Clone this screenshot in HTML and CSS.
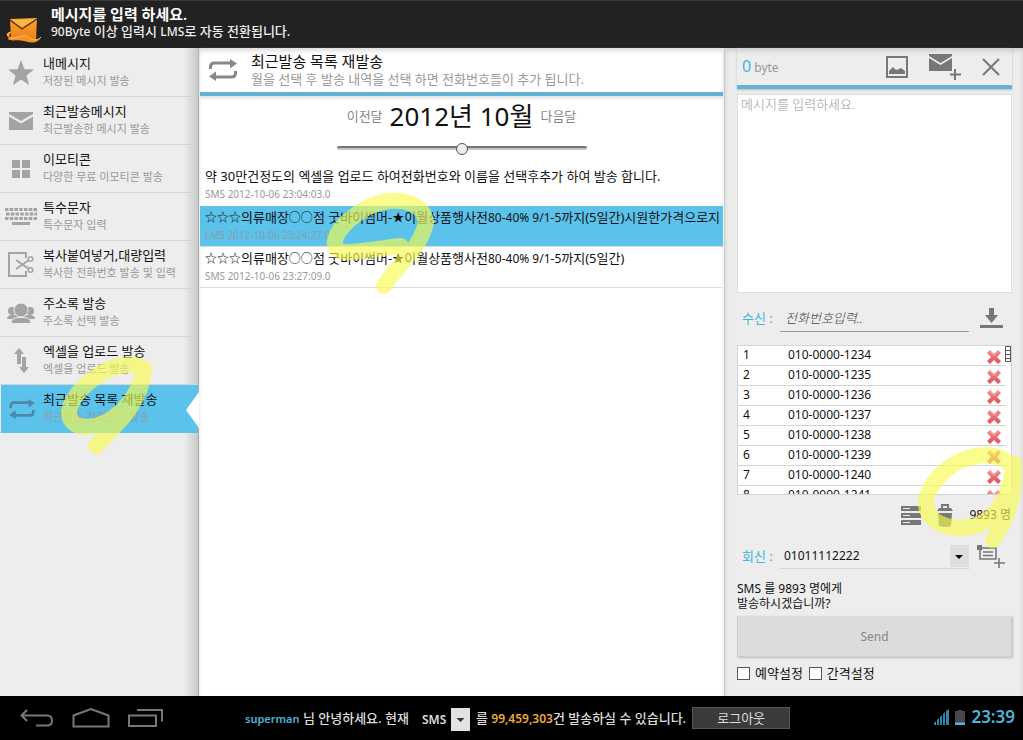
FILE: index.html
```html
<!DOCTYPE html>
<html lang="ko">
<head>
<meta charset="utf-8">
<meta name="viewport" content="width=device-width, initial-scale=1">
<title>메시지 발송</title>
<link rel="stylesheet" href="styles.css">
</head>
<body>
<svg class="defs" aria-hidden="true">
  <defs>
    <linearGradient id="orange" x1="0" y1="0" x2="0" y2="1"><stop offset="0" stop-color="#f9a733"/><stop offset="1" stop-color="#f07a16"/></linearGradient>
    <linearGradient id="red" x1="0" y1="0" x2="0" y2="1"><stop offset="0" stop-color="#f08a8a"/><stop offset="1" stop-color="#e0525c"/></linearGradient>
    <symbol id="repeat" viewBox="0 0 28 22"><path d="M1.500 10V8q0-4 4-4H22M26.500 12v2q0 4-4 4H6" fill="none" stroke="currentColor" stroke-width="3"/><path d="M21 0l7 4.500-7 5zM7 12.500v9.500l-7-4.500z" fill="currentColor"/></symbol>
    <symbol id="cross" viewBox="0 0 14 14"><path d="M3 0l4 4 4-4 3 3-4 4 4 4-3 3-4-4-4 4-3-3 4-4-4-4z" fill="url(#red)"/><path d="M3 1.500l4 4 4-4" fill="none" stroke="#f6b0b0"/></symbol>
  </defs>
</svg>

<header class="topbar">
  <svg class="logo" viewBox="0 0 36 26" aria-hidden="true">
    <path d="M4 2L31 1l-1 22L5 21z" fill="url(#orange)"/>
    <path d="M5 3l11 7L30 2z" fill="#fbb646"/>
    <path d="M4 3l12 9L31 2" fill="none" stroke="#5a2c08" stroke-width="1.400"/>
    <path d="M5 15C0 15-1 20 5 21c8 1 12-5 19 0 5 3 10 2 11-1-3 7-11 6-17 4S5 25 2 22" fill="#f7931e"/>
    <path d="M5 15c-5 1-5 5 1 6 7 0 12-5 18 0 4 3 9 2 11-1" fill="none" stroke="#ffc35c"/>
  </svg>
  <div>
    <h1 class="topbar-title">메시지를 입력 하세요.</h1>
    <p class="topbar-note"><span class="latin">90Byte</span> 이상 입력시 <span class="latin">LMS</span>로 자동 전환됩니다.</p>
  </div>
</header>

<main class="layout">
  <nav class="sidebar" aria-label="메뉴">
    <a class="menu-item" href="#saved">
      <svg width="26" height="25" viewBox="0 0 26 25"><path d="M13 0l3.400 9.200 9.600.4-7.600 6 2.700 9.400-8.100-5.500L4.900 25l2.700-9.400L0 9.600l9.600-.4z"/></svg>
      <span class="menu-text"><span class="menu-title">내메시지</span><span class="menu-note">저장된 메시지 발송</span></span>
    </a>
    <a class="menu-item" href="#recent">
      <svg width="24" height="18" viewBox="0 0 24 18"><path d="M0 0h24v2l-12 7L0 2zM0 4.500l12 7 12-7V18H0z"/></svg>
      <span class="menu-text"><span class="menu-title">최근발송메시지</span><span class="menu-note">최근발송한 메시지 발송</span></span>
    </a>
    <a class="menu-item" href="#emoticon">
      <svg width="18" height="18" viewBox="0 0 18 18"><path d="M0 0h8v8H0zM10 0h8v8h-8zM0 10h8v8H0zM10 10h8v8h-8z"/></svg>
      <span class="menu-text"><span class="menu-title">이모티콘</span><span class="menu-note">다양한 무료 이모티콘 발송</span></span>
    </a>
    <a class="menu-item" href="#special">
      <svg width="32" height="17" viewBox="0 0 32 17"><path d="M0 1.500h32M1 6h31M0 10.500h32" fill="none" stroke="currentColor" stroke-width="3" stroke-dasharray="3.500 1.250"/><path d="M7 14h18v3H7z"/></svg>
      <span class="menu-text"><span class="menu-title">특수문자</span><span class="menu-note">특수문자 입력</span></span>
    </a>
    <a class="menu-item" href="#paste">
      <svg width="26" height="25" viewBox="0 0 26 25"><path d="M18 6V1H1v23h17v-5" fill="none" stroke="currentColor" stroke-width="2"/><path d="M8 8l13 9M8 17l13-9" fill="none" stroke="currentColor" stroke-width="2"/><circle cx="22.500" cy="7" r="2.300" fill="none" stroke="currentColor" stroke-width="1.500"/><circle cx="22.500" cy="18" r="2.300" fill="none" stroke="currentColor" stroke-width="1.500"/></svg>
      <span class="menu-text"><span class="menu-title">복사붙여넣거,대량입력</span><span class="menu-note">복사한 전화번호 발송 및 입력</span></span>
    </a>
    <a class="menu-item" href="#contacts">
      <svg width="28" height="20" viewBox="0 0 28 20"><circle cx="5" cy="8" r="4"/><circle cx="23" cy="8" r="4"/><path d="M0 16q0-4 6-4t6 4zM16 16q0-4 6-4t6 4z"/><path d="M4 20.500q0-5.500 7-6h6q7 .5 7 6z" stroke="#ededed"/><circle cx="14" cy="7" r="7" stroke="#ededed"/></svg>
      <span class="menu-text"><span class="menu-title">주소록 발송</span><span class="menu-note">주소록 선택 발송</span></span>
    </a>
    <a class="menu-item" href="#excel">
      <svg width="15" height="25" viewBox="0 0 15 25"><path d="M5 0l5 6H7v10H3V6H0zM8 9h4v10h3l-5 6-5-6h3z"/></svg>
      <span class="menu-text"><span class="menu-title">엑셀을 업로드 발송</span><span class="menu-note">엑셀을 업로드 발송</span></span>
    </a>
    <a class="menu-item selected" href="#resend" aria-current="page">
      <svg width="26" height="20"><use href="#repeat"/></svg>
      <span class="menu-text"><span class="menu-title">최근발송 목록 재발송</span><span class="menu-note">최근발송 전화번호 발송</span></span>
    </a>
  </nav>

  <section class="history">
    <header class="history-head">
      <svg width="28" height="22" aria-hidden="true"><use href="#repeat"/></svg>
      <div>
        <h2 class="history-title">최근발송 목록 재발송</h2>
        <p class="history-note">월을 선택 후 발송 내역을 선택 하면 전화번호들이 추가 됩니다.</p>
      </div>
    </header>
    <div class="month">
      <button class="month-step" type="button">이전달</button>
      <strong class="month-name">2012년 10월</strong>
      <button class="month-step" type="button">다음달</button>
    </div>
    <input class="slider" type="range" min="0" max="10" value="5" aria-label="월 선택">
    <ul class="messages">
      <li class="message"><p class="message-text">약 30만건정도의 엑셀을 업로드 하여전화번호와 이름을 선택후추가 하여 발송 합니다.</p><p class="message-meta">SMS 2012-10-06 23:04:03.0</p></li>
      <li class="message chosen"><p class="message-text"><span class="latin">☆☆☆</span>의류매장<span class="latin">○○</span>점 굿바이썸머-<span class="latin">★</span>이월상품행사전<span class="latin">80-40% 9/1-5</span>까지(5일간)시원한가격으로지</p><p class="message-meta">LMS 2012-10-06 23:24:27.0</p></li>
      <li class="message"><p class="message-text"><span class="latin">☆☆☆</span>의류매장<span class="latin">○○</span>점 굿바이썸머-<span class="latin">★</span>이월상품행사전<span class="latin">80-40% 9/1-5</span>까지(5일간)</p><p class="message-meta">SMS 2012-10-06 23:27:09.0</p></li>
    </ul>
  </section>

  <form class="compose">
    <div class="compose-head">
      <p class="bytes"><span class="bytes-count">0</span> byte</p>
      <button class="icon-button" type="button" aria-label="사진"><svg width="22" height="22" viewBox="0 0 22 22"><path d="M1 1h20v20H1z" fill="none" stroke="currentColor" stroke-width="2"/><path d="M3 18v-3l4-4 3 3 3-1 2-1 4 3v3z"/></svg></button>
      <button class="icon-button" type="button" aria-label="메시지 추가"><svg width="32" height="26" viewBox="0 0 32 26"><path d="M0 0h23v2l-11.500 7L0 2zM0 4l11.500 7L23 4v13H0z"/><path d="M26 15v11M21 20.500h11" fill="none" stroke="currentColor" stroke-width="2"/></svg></button>
      <button class="icon-button" type="button" aria-label="닫기"><svg width="18" height="18" viewBox="0 0 18 18"><path d="M1 1l16 16M17 1L1 17" fill="none" stroke="currentColor" stroke-width="2"/></svg></button>
    </div>
    <textarea class="body-input" aria-label="메시지" placeholder="메시지를 입력하세요."></textarea>

    <div class="field">
      <label class="field-label" for="to">수신 :</label>
      <input class="to-input" id="to" type="text" placeholder="전화번호입력..">
      <button class="icon-button" type="button" aria-label="번호 추가"><svg width="23" height="20" viewBox="0 0 23 20"><path d="M9 0h5v7h4l-6.500 8L5 7h4zM0 17h23v3H0z"/></svg></button>
    </div>

    <div class="numbers">
      <table class="number-table">
        <tbody>
          <tr><td class="index">1</td><td>010-0000-1234</td><td class="remove"><button class="remove-button" type="button" aria-label="삭제"><svg width="14" height="14"><use href="#cross"/></svg></button></td></tr>
          <tr><td class="index">2</td><td>010-0000-1235</td><td class="remove"><button class="remove-button" type="button" aria-label="삭제"><svg width="14" height="14"><use href="#cross"/></svg></button></td></tr>
          <tr><td class="index">3</td><td>010-0000-1236</td><td class="remove"><button class="remove-button" type="button" aria-label="삭제"><svg width="14" height="14"><use href="#cross"/></svg></button></td></tr>
          <tr><td class="index">4</td><td>010-0000-1237</td><td class="remove"><button class="remove-button" type="button" aria-label="삭제"><svg width="14" height="14"><use href="#cross"/></svg></button></td></tr>
          <tr><td class="index">5</td><td>010-0000-1238</td><td class="remove"><button class="remove-button" type="button" aria-label="삭제"><svg width="14" height="14"><use href="#cross"/></svg></button></td></tr>
          <tr><td class="index">6</td><td>010-0000-1239</td><td class="remove"><button class="remove-button" type="button" aria-label="삭제"><svg width="14" height="14"><use href="#cross"/></svg></button></td></tr>
          <tr><td class="index">7</td><td>010-0000-1240</td><td class="remove"><button class="remove-button" type="button" aria-label="삭제"><svg width="14" height="14"><use href="#cross"/></svg></button></td></tr>
          <tr><td class="index">8</td><td>010-0000-1241</td><td class="remove"><button class="remove-button" type="button" aria-label="삭제"><svg width="14" height="14"><use href="#cross"/></svg></button></td></tr>
        </tbody>
      </table>
      <svg class="thumb" width="6" height="16" viewBox="0 0 6 16" aria-hidden="true"><path d="M.5.5h5v15h-5zM0 4.500h6M0 8.500h6M0 12.500h6" fill="#fff" stroke="#555"/></svg>
    </div>

    <div class="totals">
      <button class="icon-button" type="button" aria-label="목록"><svg width="20" height="19" viewBox="0 0 20 19"><path d="M0 0h20v5H0zM0 7h20v5H0zM0 14h20v5H0z"/><path d="M2 2.500h7M2 9.500h7M2 16.500h7" stroke="#ededed"/></svg></button>
      <button class="icon-button" type="button" aria-label="전체 삭제"><svg width="16" height="23" viewBox="0 0 16 23"><path d="M5 4V1h6v3" fill="none" stroke="currentColor" stroke-width="2"/><path d="M2 4h12l2 3H0zM1 9h14l-1 13q-6 2-12 0z"/></svg></button>
      <span>9893 명</span>
    </div>

    <div class="field reply">
      <label class="field-label" for="from">회신 :</label>
      <span class="pick">
        <select class="pick-select" id="from"><option>01011112222</option></select>
        <svg class="pick-arrow" width="19" height="22" viewBox="0 0 19 22" aria-hidden="true"><path d="M0 0h19v22H0z" fill="#ddd"/><path d="M5 10h8l-4 4z" fill="#000"/></svg>
      </span>
      <button class="icon-button" type="button" aria-label="회신번호 추가"><svg width="28" height="23" viewBox="0 0 28 23"><path d="M0 0h5v5H0z"/><path d="M3 3h16v11H3zM6 7h10M6 10.500h10M22 13v10M17 18h11" fill="none" stroke="currentColor" stroke-width="1.600"/></svg></button>
    </div>

    <p class="confirm">SMS 를 9893 명에게<br>발송하시겠습니까?</p>
    <button class="send" type="submit" disabled>Send</button>
    <div class="options">
      <label class="option"><input class="tick" type="checkbox">예약설정</label>
      <label class="option"><input class="tick" type="checkbox">간격설정</label>
    </div>
  </form>
</main>

<footer class="bottombar">
  <div class="keys">
    <button class="key" type="button" aria-label="뒤로"><svg width="34" height="18" viewBox="0 0 34 18"><path d="M7 1L1.500 6.500 7 12M2 6.500h25q5 0 5 5t-5 5H16"/></svg></button>
    <button class="key" type="button" aria-label="홈"><svg width="38" height="20" viewBox="0 0 38 20"><path d="M1.500 18.500v-11L19 1l17.500 6.500v11z"/></svg></button>
    <button class="key" type="button" aria-label="최근 앱"><svg width="36" height="18" viewBox="0 0 36 18"><path d="M1 6.500h27v10.500H1zM9 1h25v11.500"/></svg></button>
  </div>
  <div class="account">
    <span class="greeting"><b class="user">superman</b> 님 안녕하세요. 현재</span>
    <span class="kind">
      <select class="kind-select" aria-label="종류"><option>SMS</option></select>
      <svg class="pick-arrow" width="19" height="23" viewBox="0 0 19 23" aria-hidden="true"><path d="M0 0h19v23H0z" fill="#e2e2e2"/><path d="M5.500 10h8l-4 4z" fill="#333"/></svg>
    </span>
    <span class="balance">를 <b class="amount">99,459,303</b>건 발송하실 수 있습니다.</span>
    <button class="logout" type="button">로그아웃</button>
  </div>
  <div class="status">
    <svg width="15" height="16" viewBox="0 0 15 16" aria-hidden="true"><path d="M0 16v-2l2-2v4zM3 16v-5l2-2v7zM6 16V8l2-2v10zM9 16V5l2-2v13zM12 16V2l3-2v16z" fill="#2d87ad"/></svg>
    <svg width="10" height="15" viewBox="0 0 10 15" aria-hidden="true"><path d="M0 1h3V0h4v1h3v12H0z" fill="#484848"/><path d="M0 12.500h10V15H0z" fill="#4fb8e2"/></svg>
    <time class="clock">23:39</time>
  </div>
</footer>

<svg class="marker" width="1023" height="740" viewBox="0 0 1023 740" aria-hidden="true">
  <path d="M144 369C132 360 106 366 87 384C66 402 61 425 86 427C112 427 139 400 144 369C142 401 119 423 96 446"/>
  <path d="M426 222C423 197 384 194 357 214C332 231 326 254 350 252C374 250 389 247 401 246M426 222C421 249 397 264 384 286"/>
  <path d="M1009 464C992 446 954 457 936 480C914 507 931 526 958 528C986 529 1008 509 1014 464C1016 498 1006 520 993 540"/>
</svg>
</body>
</html>
```

FILE: styles.css
```css
* { box-sizing: border-box; }

body {
  position: relative;
  display: flex;
  flex-direction: column;
  min-height: 100vh;
  margin: 0;
  overflow-x: hidden;
  background: #ededed;
  color: #111;
  font: 13px/18px "Noto Sans", "Noto Sans CJK KR", sans-serif;
}

h1, h2, p, ul { margin: 0; padding: 0; }
ul { list-style: none; }
svg { display: block; flex: none; fill: currentColor; }
button, input, select, textarea { margin: 0; padding: 0; border: 0; background: none; color: inherit; font: inherit; }
a { color: inherit; text-decoration: none; }
.defs { position: absolute; width: 0; height: 0; }
.latin { font-size: 12px; }

.topbar {
  display: flex;
  align-items: center;
  gap: 9px;
  height: 48px;
  padding: 0 6px 4px;
  border-top: 1px solid #3a3a3a;
  background: #222;
  color: #fff;
}
.logo { width: 36px; height: 26px; margin-top: 14px; }
.topbar-title { font-size: 15px; line-height: 18px; font-weight: 600; }
.topbar-note { color: #eee; font-size: 13px; line-height: 17px; font-weight: 500; }

.layout { display: grid; flex: 1; grid-template-columns: 199px minmax(0, 1fr) 299px; }

.sidebar { padding-top: 1px; background: linear-gradient(to left, #c8c8c8, #ededed 14px); border-right: 1px solid #aaa; }
.menu-item {
  display: grid;
  grid-template-columns: 42px 1fr;
  align-items: center;
  height: 48px;
  border-bottom: 1px solid #d3d3d3;
  color: #a3a3a3;
}
.menu-item svg { justify-self: center; }
.menu-text { padding: 0 0 2px 1px; white-space: nowrap; }
.menu-title { display: block; color: #111; font-size: 13px; line-height: 17px; }
.menu-note { display: block; color: #999; font-size: 11px; line-height: 17px; }
.selected { position: relative; border-left: 1px solid #ededed; grid-template-columns: 41px 1fr; background: #5bc2ec; border-bottom-color: #5bc2ec; color: #4b8ba5; }
.selected .menu-note { color: #8b9da5; }
.selected::after {
  position: absolute;
  top: 7px;
  right: -1px;
  width: 13px;
  height: 36px;
  background: #fff;
  clip-path: polygon(100% 0, 0 50%, 100% 100%);
  content: "";
}

.history { padding: 0 1px; background: #fff; box-shadow: inset 0 3px 4px #ddd; }
.history-head {
  display: flex;
  align-items: center;
  gap: 14px;
  height: 48px;
  padding: 0 9px;
  border-bottom: 4px solid #5fb4d5;
  box-shadow: 0 2px 3px #ddd;
  color: #888;
}
.history-title { color: #111; font-size: 15px; line-height: 18px; font-weight: 400; }
.history-note { color: #999; font-size: 13px; line-height: 18px; }
.month { display: flex; justify-content: center; align-items: center; gap: 7px; height: 40px; }
.month-step { color: #888; }
.month-name { font-size: 26px; line-height: 38px; font-weight: 400; }
.slider { display: block; width: 250px; height: 14px; margin: 5px auto; appearance: none; }
.slider::-webkit-slider-runnable-track { height: 4px; border-top: 2px solid #777; border-radius: 2px; background: #c4c4c4; }
.slider::-webkit-slider-thumb { width: 12px; height: 12px; margin-top: -5px; border: 1px solid #555; border-radius: 50%; background: #eee; appearance: none; }
.messages { padding-top: 5px; }
.message { height: 41px; padding: 2px 0 0 5px; overflow: hidden; border-bottom: 1px solid #ddd; white-space: nowrap; }
.message:first-child { border-bottom-color: transparent; }
.message-text { line-height: 19px; }
.message-meta { color: #999; font-size: 10px; line-height: 17px; }
.chosen { background: #5bc2ec; }
.chosen .message-meta { color: #8b9da5; }

.compose { padding: 0 11px 0 12px; border-left: 1px solid #ccc; box-shadow: inset 0 3px 4px #ccc; }
.icon-button { color: #777; cursor: pointer; }
.compose-head {
  display: flex;
  align-items: center;
  gap: 21px;
  height: 41px;
  padding: 0 12px 0 5px;
  border-bottom: 4px solid #5fb4d5;
  box-shadow: 0 1px 2px #bbb;
}
.bytes { margin-right: auto; color: #999; font-size: 12px; }
.bytes-count { color: #45b3dc; font-size: 16px; }
.body-input {
  display: block;
  width: 100%;
  height: 199px;
  margin-top: 5px;
  padding: 0 3px;
  border: 1px solid #ddd;
  background: #fff;
  resize: none;
}
.body-input::placeholder { color: #999; font-weight: 300; opacity: 1; }

.field { display: grid; grid-template-columns: 38px 189px 1fr; gap: 5px; align-items: center; margin-top: 11px; padding-bottom: 1px; }
.field .icon-button { justify-self: start; margin-left: 6px; }
.field-label { padding-left: 5px; color: #45b3dc; white-space: nowrap; }
.to-input { height: 28px; padding-left: 5px; border-bottom: 1px solid #999; }
.to-input::placeholder { color: #444; font-style: italic; font-weight: 300; opacity: 1; }

.numbers { position: relative; height: 150px; margin-top: 12px; overflow: hidden; border: 1px solid #d3d3d3; background: #fff; }
.number-table { width: 100%; padding-right: 5px; border-spacing: 0; font-size: 12px; line-height: 16px; }
.number-table td { height: 20px; padding: 0 0 2px; border-bottom: 1px solid #d3d3d3; }
.number-table .index { width: 50px; padding-left: 5px; }
.number-table .remove { width: 19px; padding: 3px 0 0; }
.remove-button { display: block; height: 14px; cursor: pointer; }
.thumb { position: absolute; top: 0; right: 0; }

.totals { display: flex; justify-content: flex-end; align-items: center; gap: 16px; height: 40px; padding-right: 1px; font-size: 12px; }
.reply { margin-top: 8px; }
.reply .icon-button { margin-left: 3px; }
.pick { display: grid; height: 26px; border-bottom: 1px solid #d3d3d3; }
.pick > *, .kind > * { grid-area: 1 / 1; }
.pick-select { padding-left: 4px; appearance: none; font-size: 12px; }
.pick-arrow { place-self: center end; pointer-events: none; }
.confirm { margin-top: 11px; font-size: 12px; line-height: 15px; }
.send {
  display: block;
  width: 100%;
  height: 41px;
  margin-top: 5px;
  border: 1px solid #ccc;
  border-top-color: #ddd;
  background: #dcdcdc;
  box-shadow: 1px 1px 2px #bbb;
  color: #888;
  font-size: 12px;
}
.options { display: flex; gap: 6px; margin-top: 7px; }
.option { display: flex; align-items: center; gap: 5px; font-size: 13px; }
.tick { width: 13px; height: 13px; border: 1px solid #555; background: #fff; appearance: none; }
.tick:checked { background: #45b3dc; }

.bottombar { display: flex; align-items: center; height: 44px; padding: 0 8px 0 20px; background: #000; color: #ddd; font-size: 12px; }
.keys { display: flex; align-items: center; gap: 18px; width: 225px; }
.key svg { fill: none; stroke: #777; stroke-width: 2; }
.account { display: flex; align-items: center; gap: 6px; font-size: 13px; font-weight: 500; white-space: nowrap; }
.user { color: #4cb3dc; font-size: 11px; font-weight: 600; }
.amount { color: #f2a934; font-size: 12px; font-weight: 600; }
.kind { display: grid; width: 55px; margin-top: 3px; padding-left: 7px; font-size: 12px; font-weight: 600; }
.kind-select { appearance: none; color: #ddd; }
.logout { width: 98px; height: 22px; border: 1px solid #555; background: #3a3a3a; color: #ddd; font-size: 13px; line-height: 18px; font-weight: 400; }
.status { display: flex; align-items: center; gap: 6px; margin-left: auto; padding-bottom: 2px; color: #4cb3dc; }
.clock { font-size: 17px; line-height: 20px; font-weight: 600; }

/* Highlighter strokes drawn over the screen */
.marker { position: absolute; top: 0; left: 0; pointer-events: none; fill: none; stroke: #f8fb50; stroke-opacity: .65; stroke-width: 16; stroke-linecap: round; stroke-linejoin: round; }
```
